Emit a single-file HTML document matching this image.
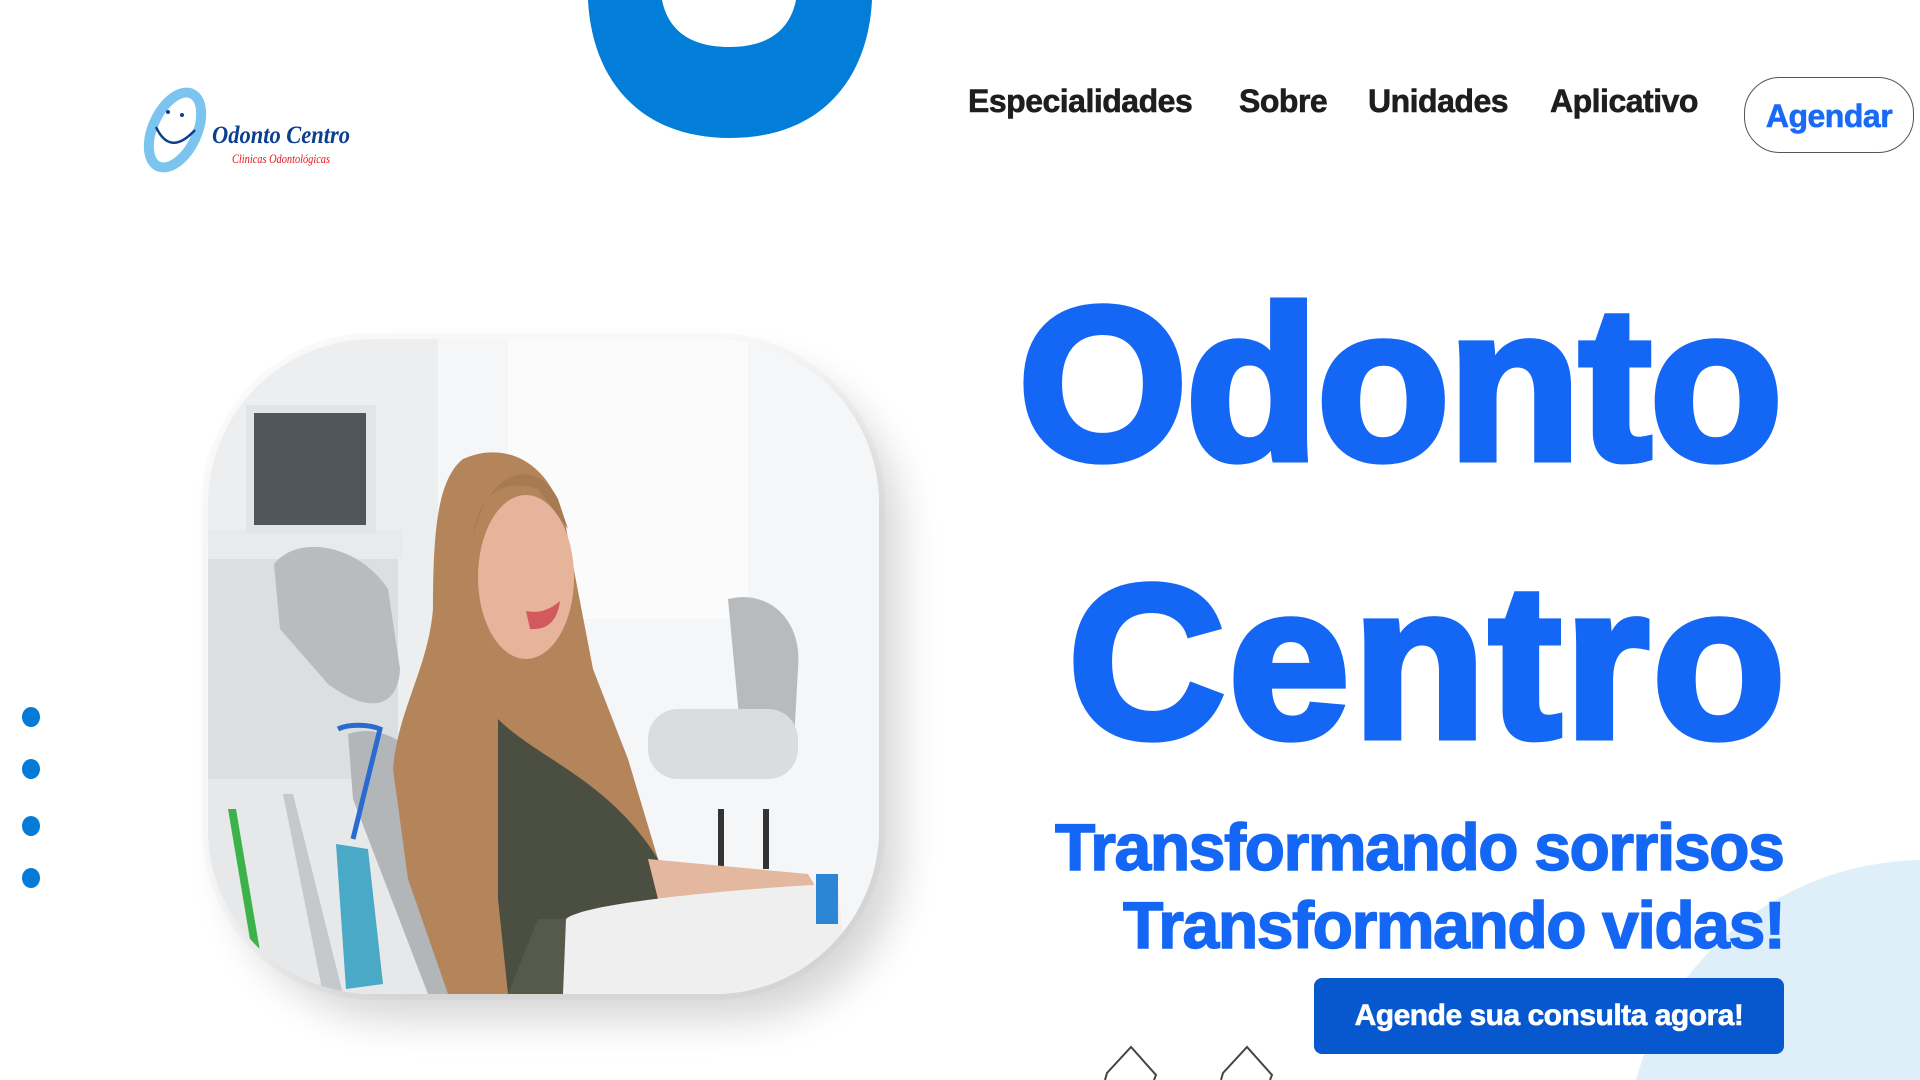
<!DOCTYPE html>
<html><head><meta charset="utf-8"><style>
*{margin:0;padding:0;box-sizing:border-box}
html,body{width:1920px;height:1080px;overflow:hidden;background:#fff;font-family:"Liberation Sans",Arial,sans-serif;position:relative}
.a{position:absolute;white-space:nowrap}
.nav{font-weight:bold;font-size:32px;line-height:32px;color:#1e1e1e;top:85px;letter-spacing:-0.5px;-webkit-text-stroke:0.6px #1e1e1e}
.big{font-weight:bold;font-size:218px;line-height:218px;color:#1466f4;-webkit-text-stroke:7px #1466f4}
.sub{font-weight:bold;font-size:66px;line-height:66px;color:#1466f4;letter-spacing:-1.4px;-webkit-text-stroke:1.5px #1466f4}
.dot{position:absolute;left:22px;width:18px;height:20px;border-radius:50%;background:#037bd7}
</style></head><body>

<svg class="a" style="left:0;top:0" width="1920" height="1080">
  <path d="M588 0 C592 80 640 138 730 138 C820 138 868 80 872 0 Z" fill="#027ed8"/>
  <path d="M662 0 C668 30 690 47 729 47 C768 47 790 30 796 0 Z" fill="#fff"/>
  <circle cx="1925" cy="1160" r="300" fill="#dfeff9"/>
  <polyline points="1105,1080 1107,1073 1131,1047 1156,1075 1154,1080" fill="none" stroke="#444" stroke-width="2"/>
  <polyline points="1221,1080 1223,1073 1247,1047 1272,1075 1270,1080" fill="none" stroke="#444" stroke-width="2"/>
</svg>

<svg class="a" style="left:140px;top:85px" width="230" height="95">
  <ellipse cx="35" cy="45" rx="22" ry="40" transform="rotate(25 35 45)" fill="none" stroke="#7cc4f0" stroke-width="10"/>
  <path d="M16 42 Q30 72 55 45" fill="none" stroke="#0c3f8c" stroke-width="2.5"/>
  <circle cx="28" cy="27" r="2" fill="#0c3f8c"/><circle cx="42" cy="30" r="2" fill="#0c3f8c"/>
  <text x="72" y="58" font-family="Liberation Serif,serif" font-style="italic" font-weight="bold" font-size="25" fill="#0c3f8c" textLength="138" lengthAdjust="spacingAndGlyphs">Odonto Centro</text>
  <text x="92" y="78" font-family="Liberation Serif,serif" font-style="italic" font-size="13" fill="#e3161b" textLength="98" lengthAdjust="spacingAndGlyphs">Clinicas Odontológicas</text>
</svg>

<div class="a nav" style="left:968px">Especialidades</div>
<div class="a nav" style="left:1239px">Sobre</div>
<div class="a nav" style="left:1368px">Unidades</div>
<div class="a nav" style="left:1550px">Aplicativo</div>
<div class="a" style="left:1744px;top:77px;width:170px;height:76px;border:1.5px solid #555;border-radius:36px"></div>
<div class="a nav" style="left:1744px;width:170px;text-align:center;top:100px;color:#1a6af5;-webkit-text-stroke:0.6px #1a6af5">Agendar</div>

<div class="a big" style="left:1018px;top:276px;letter-spacing:-2px">Odonto</div>
<div class="a big" style="left:1068px;top:554px;letter-spacing:3px">Centro</div>
<div class="a sub" style="left:1055px;top:814px">Transformando sorrisos</div>
<div class="a sub" style="left:1123px;top:892px">Transformando vidas!</div>

<div class="a" style="left:1314px;top:978px;width:470px;height:76px;background:#0757cf;border-radius:8px;color:#fff;font-weight:bold;font-size:30px;line-height:76px;text-align:center;letter-spacing:-0.5px;-webkit-text-stroke:0.6px #fff">Agende sua consulta agora!</div>

<div class="dot" style="top:707px"></div>
<div class="dot" style="top:759px"></div>
<div class="dot" style="top:816px"></div>
<div class="dot" style="top:868px"></div>

<div class="a" style="left:208px;top:339px;width:671px;height:655px;border-radius:165px;overflow:hidden;box-shadow:22px 26px 40px rgba(0,0,0,.16),0 0 0 6px #fafafa">
<svg width="671" height="655" viewBox="0 0 671 655">
  <rect width="671" height="655" fill="#eceeef"/>
  <rect x="230" y="0" width="441" height="655" fill="#f5f6f7"/>
  <rect x="300" y="0" width="240" height="280" fill="#fbfbfb"/>
  <rect x="0" y="195" width="190" height="260" fill="#dcdfe1"/>
  <rect x="0" y="190" width="195" height="30" fill="#e8eaeb"/>
  <rect x="38" y="66" width="130" height="128" fill="#e2e4e5"/>
  <rect x="46" y="74" width="112" height="112" fill="#51565b"/>
  <rect x="0" y="440" width="230" height="215" fill="#e6e8e9"/>
  <path d="M520 260 C560 250 595 280 590 330 L585 420 C575 445 545 440 535 420 Z" fill="#b8bbbe"/>
  <rect x="440" y="370" width="150" height="70" rx="30" fill="#dadcdd"/>
  <rect x="510" y="470" width="6" height="60" fill="#333"/>
  <rect x="555" y="470" width="6" height="60" fill="#333"/>
  <path d="M66 225 C90 195 150 205 180 250 L192 330 C190 370 160 375 120 345 L72 290 Z" fill="#b9bcbf"/>
  <path d="M140 395 C170 385 200 400 230 440 L300 655 L220 655 L145 460 Z" fill="#b3b6b9"/>
  <path d="M255 120 C300 100 350 125 360 200 L385 330 L420 420 L450 520 L430 580 L330 600 L300 655 L240 655 L200 540 L185 430 C190 370 220 330 225 270 C225 190 230 140 255 120 Z" fill="#b4855b"/>
  <path d="M290 380 C330 420 400 440 450 520 L470 560 L420 600 L330 655 L300 655 L290 560 Z" fill="#4b4f41"/>
  <path d="M330 580 L420 580 L470 560 L470 655 L300 655 Z" fill="#565a4b"/>
  <ellipse cx="318" cy="238" rx="48" ry="82" fill="#e6b49a"/>
  <path d="M265 200 C270 150 300 140 330 150 L360 190 L350 160 C330 120 280 125 265 200 Z" fill="#a77a52"/>
  <path d="M318 272 Q336 276 352 262 Q348 292 322 290 Z" fill="#d25a5f"/>
  <path d="M440 520 L600 535 L615 560 L450 560 Z" fill="#e4b89e"/>
  <path d="M358 580 C380 560 600 545 630 545 L640 655 L355 655 Z" fill="#efefef"/>
  <rect x="608" y="535" width="22" height="50" fill="#2b86d6"/>
  <path d="M20 470 L28 470 L55 630 L47 630 Z" fill="#3bb34a"/>
  <path d="M75 455 L85 455 L135 655 L115 655 Z" fill="#c6c9cc"/>
  <path d="M128 505 L160 510 L175 645 L138 650 Z" fill="#4aa9c6"/>
  <path d="M130 390 C140 385 160 385 172 390 L145 500" fill="none" stroke="#2a6bd1" stroke-width="5"/>
</svg>
</div>
</body></html>
